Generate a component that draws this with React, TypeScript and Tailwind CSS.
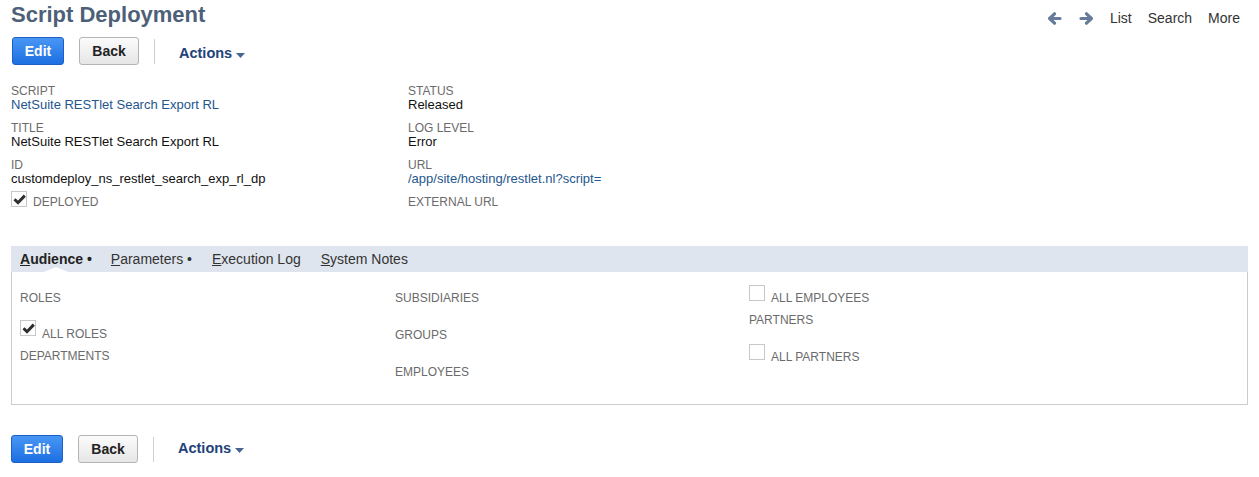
function CheckBox({ checked }: { checked?: boolean }) {
  return (
    <span className="w-[16px] h-[16px] border border-[#c8c8c8] bg-white flex items-center justify-center flex-shrink-0">
      {checked && (
        <svg width="13" height="11" viewBox="0 0 13 11">
          <path d="M1.5 5.2 L5 8.7 L11.8 1.6" fill="none" stroke="#2e2e2e" strokeWidth="3" strokeLinejoin="miter" />
        </svg>
      )}
    </span>
  );
}

function NavArrow({ dir }: { dir: 'left' | 'right' }) {
  return (
    <svg width="15" height="13" viewBox="0 0 15 13" className={dir === 'right' ? 'rotate-180' : ''}>
      <path d="M13 6.5 H3 M7.5 1.8 L2.6 6.5 L7.5 11.2" fill="none" stroke="#667a99" strokeWidth="3.2" strokeLinecap="round" strokeLinejoin="round" />
    </svg>
  );
}

function ButtonBar({ left, actionsOffset }: { left: string; actionsOffset: string }) {
  return (
    <div className={`flex items-center ${left}`}>
      <button className="w-[52px] h-[28px] rounded-[3px] border border-[#1b5fc7] bg-gradient-to-b from-[#4896f4] to-[#1c6fe2] text-white text-[14px] font-bold">
        Edit
      </button>
      <button className="ml-[15px] w-[60px] h-[28px] rounded-[3px] border border-[#b4b4b4] bg-gradient-to-b from-[#fbfbfb] to-[#e6e6e6] text-[#222] text-[14px] font-bold">
        Back
      </button>
      <div className="ml-[15px] w-px h-[25px] bg-[#cfcfcf]" />
      <button className={`ml-[24px] flex items-center gap-[4px] text-[14.5px] font-bold text-[#22427a] ${actionsOffset}`}>
        Actions
        <svg width="9" height="5" viewBox="0 0 9 5" className="mt-[2px]">
          <path d="M0 0 H9 L4.5 5 Z" fill="#4a6490" />
        </svg>
      </button>
    </div>
  );
}

function Field({ label, value, link, last }: { label: string; value?: string; link?: boolean; last?: boolean }) {
  return (
    <div className={last ? '' : 'mb-[9px]'}>
      <div className="text-[12px] leading-[14px] text-[#6b6b6b] uppercase">{label}</div>
      {value && (
        <div className={`text-[13px] leading-[14px] ${link ? 'text-[#24568e]' : 'text-[#111]'}`}>{value}</div>
      )}
    </div>
  );
}

const label = 'text-[12px] leading-[14px] text-[#6b6b6b]';

export default function App() {
  return (
    <div className="min-h-screen bg-white font-['Liberation_Sans',Arial,sans-serif]">
      {/* Header */}
      <div className="flex justify-between items-start pl-[11px] pr-[19px]">
        <h1 className="pt-[2px] text-[22px] leading-[26px] font-bold text-[#4d5f79]">Script Deployment</h1>
        <nav className="flex items-center pt-[10px] text-[14px] leading-[16px] text-[#333]">
          <NavArrow dir="left" />
          <span className="ml-[17px]"><NavArrow dir="right" /></span>
          <span className="ml-[16px]">List</span>
          <span className="ml-[16px]">Search</span>
          <span className="ml-[16px]">More</span>
        </nav>
      </div>

      <div className="mt-[9px]">
        <ButtonBar left="pl-[12px]" actionsOffset="mt-[6px]" />
      </div>

      {/* Main fields */}
      <div className="flex pl-[11px] mt-[19px]">
        <div className="w-[397px]">
          <Field label="Script" value="NetSuite RESTlet Search Export RL" link />
          <Field label="Title" value="NetSuite RESTlet Search Export RL" />
          <Field label="ID" value="customdeploy_ns_restlet_search_exp_rl_dp" last />
          <div className="flex items-start mt-[5px]">
            <CheckBox checked />
            <span className={`${label} ml-[6px] mt-[4px]`}>DEPLOYED</span>
          </div>
        </div>
        <div>
          <Field label="Status" value="Released" />
          <Field label="Log Level" value="Error" />
          <Field label="URL" value="/app/site/hosting/restlet.nl?script=" link />
          <Field label="External URL" last />
        </div>
      </div>

      {/* Subtabs */}
      <div className="mx-[11px] mt-[37px]">
        <div className="h-[26px] bg-[#dfe5ee] flex items-stretch pl-[9px] gap-[19px] text-[14px] leading-[16px]">
          <div className="relative pt-[5px] font-bold text-[#222]">
            <span className="underline">A</span>udience •
            <span className="absolute bottom-0 left-1/2 -translate-x-1/2 w-0 h-0 border-l-[12px] border-r-[12px] border-b-[5px] border-l-transparent border-r-transparent border-b-white" />
          </div>
          <div className="pt-[5px] text-[#333]">
            <span className="underline">P</span>arameters •
          </div>
          <div className="pt-[5px] text-[#333] ml-[1px]">
            <span className="underline">E</span>xecution Log
          </div>
          <div className="pt-[5px] text-[#333] ml-[1px]">
            <span className="underline">S</span>ystem Notes
          </div>
        </div>
        <div className="h-[133px] border border-t-0 border-[#cccccc] flex pl-[8px]">
          <div className="w-[375px] pt-[19px]">
            <div className={label}>ROLES</div>
            <div className="flex items-start mt-[15px]">
              <CheckBox checked />
              <span className={`${label} ml-[6px] mt-[7px]`}>ALL ROLES</span>
            </div>
            <div className={`${label} mt-[8px]`}>DEPARTMENTS</div>
          </div>
          <div className="w-[354px] pt-[19px]">
            <div className={label}>SUBSIDIARIES</div>
            <div className={`${label} mt-[23px]`}>GROUPS</div>
            <div className={`${label} mt-[23px]`}>EMPLOYEES</div>
          </div>
          <div className="pt-[13px]">
            <div className="flex items-start">
              <CheckBox />
              <span className={`${label} ml-[6px] mt-[6px]`}>ALL EMPLOYEES</span>
            </div>
            <div className={`${label} mt-[8px]`}>PARTNERS</div>
            <div className="flex items-start mt-[17px]">
              <CheckBox />
              <span className={`${label} ml-[6px] mt-[6px]`}>ALL PARTNERS</span>
            </div>
          </div>
        </div>
      </div>

      <div className="mt-[30px]">
        <ButtonBar left="pl-[11px]" actionsOffset="" />
      </div>
    </div>
  );
}
